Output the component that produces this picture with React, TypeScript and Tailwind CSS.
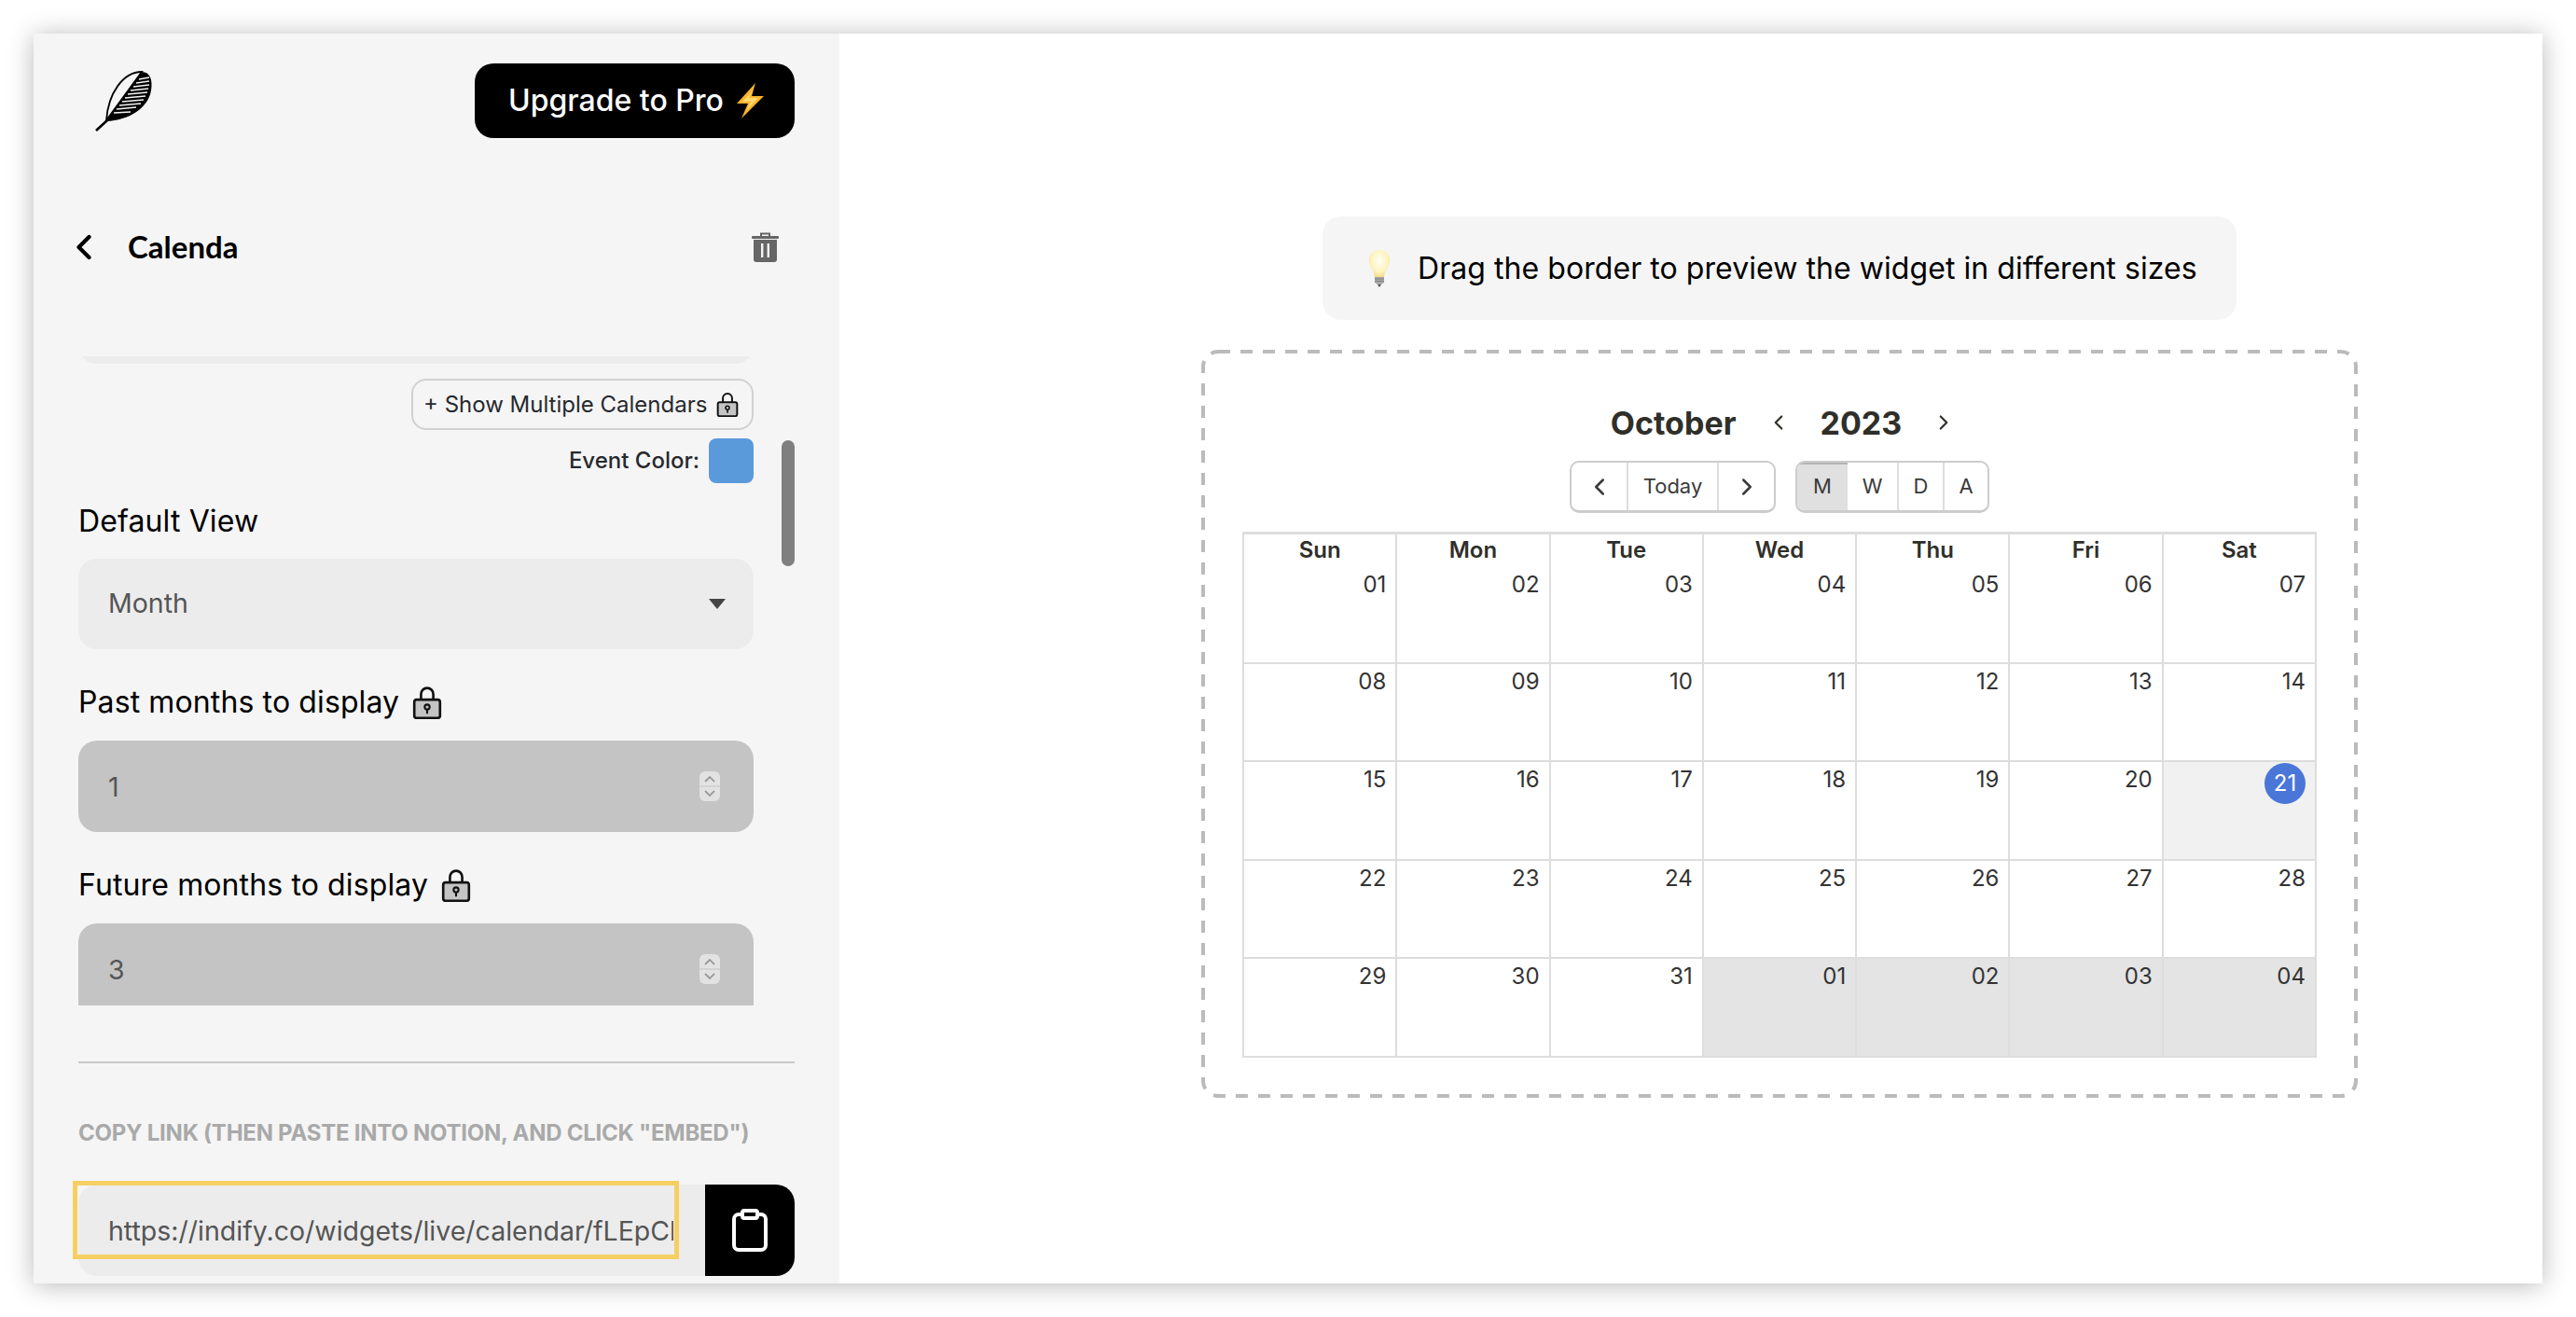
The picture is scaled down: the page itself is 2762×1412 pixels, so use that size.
import { ChevronLeft, ChevronRight } from "lucide-react";

const Lock = ({ size = 32 }: { size?: number }) => (
  <svg width={size} height={size * 1.15} viewBox="0 0 24 28" className="shrink-0">
    <path d="M7 12V7a5 5 0 0 1 10 0v5" fill="none" stroke="#111" strokeWidth="2" />
    <rect x="1.5" y="11.5" width="21" height="15" rx="2" fill="#c4c4c4" stroke="#111" strokeWidth="2" />
    <circle cx="12" cy="17.5" r="2" fill="none" stroke="#111" strokeWidth="1.6" />
    <path d="M12 19.5v3.5" stroke="#111" strokeWidth="1.6" />
  </svg>
);

const Logo = () => (
  <svg width="66" height="69" viewBox="40 24 66 69">
    <path d="M54 79C56 50 72 27 92 27L54 79Z" fill="none" stroke="#000" strokeWidth="1.8" />
    <path d="M54 80L92 27C101 27 104 36 102 47C99 66 78 79 54 80Z" fill="#000" />
    <g stroke="#f5f5f5" strokeWidth="1.3">
      <path d="M89 35L100 33" />
      <path d="M86 39L100 37" />
      <path d="M83 43L100 41" />
      <path d="M80 47L99 45" />
      <path d="M77 51L98 49" />
      <path d="M74 55L96 53" />
      <path d="M71 59L94 57" />
      <path d="M68 63L91 61" />
      <path d="M65 67L86 65" />
      <path d="M62 71L80 70" />
    </g>
    <path d="M55 79L43 90" stroke="#000" strokeWidth="2.6" />
  </svg>
);

const Bolt = () => (
  <svg width="29" height="38" viewBox="0 0 29 38" className="shrink-0">
    <path d="M20 0L0 22H12L5 38L29 14H16L20 0Z" fill="#fbb32e" />
    <path d="M17 8L6 20H15L10 30L23 16H13L17 8Z" fill="#fdd76a" />
  </svg>
);

const Trash = () => (
  <svg width="29" height="32" viewBox="0 0 29 32">
    <path d="M10 4V1.5h9V4" fill="none" stroke="#666" strokeWidth="2" />
    <rect x="0" y="4" width="29" height="3" rx="1" fill="#666" />
    <path d="M2 8h25v21a3 3 0 0 1-3 3H5a3 3 0 0 1-3-3Z" fill="#666" />
    <rect x="10" y="12" width="2.4" height="15" fill="#f5f5f5" />
    <rect x="16.6" y="12" width="2.4" height="15" fill="#f5f5f5" />
  </svg>
);

const Bulb = () => (
  <svg width="26" height="40" viewBox="0 0 26 40" className="shrink-0">
    <defs>
      <radialGradient id="bulbGlow" cx="50%" cy="40%" r="60%">
        <stop offset="0%" stopColor="#fffef5" />
        <stop offset="70%" stopColor="#fdf3bd" />
        <stop offset="100%" stopColor="#f2dc8c" />
      </radialGradient>
    </defs>
    <path d="M13 0C20 0 24 5 24 11C24 18 19 21 18 29H8C7 21 2 18 2 11C2 5 6 0 13 0Z" fill="url(#bulbGlow)" />
    <path d="M8 29h10v6l-3 2h-4l-3-2Z" fill="#a9a9a9" />
    <path d="M8 31h10M8 33.5h10" stroke="#777" strokeWidth="0.8" />
    <path d="M11 37h4l-2 3Z" fill="#555" />
  </svg>
);

const Stepper = () => (
  <svg width="22" height="32" viewBox="0 0 22 32" className="shrink-0">
    <rect width="22" height="32" rx="6" fill="#e2e2e2" />
    <path d="M0 16h22" stroke="#c4c4c4" strokeWidth="1" />
    <path d="M6 11l5-5 5 5M6 21l5 5 5-5" fill="none" stroke="#9a9a9a" strokeWidth="1.8" />
  </svg>
);

const NumberField = ({ value, clip }: { value: string; clip?: boolean }) => (
  <div
    className={`mt-[21px] flex h-[98px] w-[724px] shrink-0 items-center justify-between bg-[#c4c4c4] pl-[32px] pr-[36px] text-[28.5px] text-[#555555] ${
      clip ? "rounded-t-[20px]" : "rounded-[20px]"
    }`}
  >
    <span className="pt-[2px]">{value}</span>
    <Stepper />
  </div>
);

const FieldLabel = ({ text, locked, mt }: { text: string; locked?: boolean; mt: string }) => (
  <div className={`flex h-[40px] shrink-0 items-center gap-[14px] text-[32px] tracking-[0.12px] text-black ${mt}`}>
    <span>{text}</span>
    {locked && <Lock />}
  </div>
);

const weekDays = ["Sun", "Mon", "Tue", "Wed", "Thu", "Fri", "Sat"];
const days = [
  "01", "02", "03", "04", "05", "06", "07",
  "08", "09", "10", "11", "12", "13", "14",
  "15", "16", "17", "18", "19", "20", "21",
  "22", "23", "24", "25", "26", "27", "28",
  "29", "30", "31", "01", "02", "03", "04",
];

const Calendar = () => (
  <div className="mt-[20px] grid w-[1152px] grid-cols-7 border-l-2 border-t-[3px] border-[#dddddd]">
    {weekDays.map((day) => (
      <div
        key={day}
        className="h-[33px] border-r-2 border-[#dddddd] pt-[2px] text-center text-[24px] font-semibold leading-[30px] text-[#2f2f2a]"
      >
        {day}
      </div>
    ))}
    {days.map((day, i) => {
      const isToday = i === 20;
      const isOther = i > 30;
      return (
        <div
          key={i}
          className={`flex h-[105.5px] justify-end border-b-2 border-r-2 border-[#dddddd] pr-[10px] text-[24px] text-[#333333] ${
            isToday ? "bg-[#f1f1f1]" : isOther ? "bg-[#e4e4e4]" : "bg-white"
          }`}
        >
          {isToday ? (
            <span className="mt-[1px] flex h-[44px] w-[44px] items-center justify-center rounded-full bg-[#4a76d8] text-white">
              21
            </span>
          ) : (
            <span className={`leading-[30px] ${i < 7 ? "pt-[6px]" : "pt-[4px]"}`}>{day}</span>
          )}
        </div>
      );
    })}
  </div>
);

const App = () => {
  return (
    <div className="h-[1412px] w-[2762px] overflow-hidden bg-white p-[36px] font-['Inter',sans-serif]">
      <div className="flex h-[1340px] w-[2690px] bg-white shadow-[0_2px_26px_rgba(0,0,0,0.28)]">
        {/* sidebar */}
        <div className="flex h-full w-[864px] shrink-0 flex-col bg-[#f5f5f5] px-[48px] pt-[32px]">
          <div className="flex h-[80px] shrink-0 items-start justify-between">
            <div className="ml-[16px] mt-[6px]">
              <Logo />
            </div>
            <div className="flex h-[80px] w-[343px] items-center gap-[14px] rounded-[20px] bg-black pl-[36px] text-[32px] font-medium text-white">
              <span>Upgrade to Pro</span>
              <Bolt />
            </div>
          </div>

          <div className="mt-[101px] flex h-[32px] w-[751px] shrink-0 items-center justify-between">
            <div className="flex items-center">
              <ChevronLeft size={44} strokeWidth={2.3} className="-ml-[16px] text-black" />
              <span className="ml-[25px] font-['Lato',sans-serif] text-[33px] font-bold text-black">Calenda</span>
            </div>
            <Trash />
          </div>

          <div className="relative mt-[101px] flex h-[696px] shrink-0 flex-col overflow-hidden">
            <div className="-mt-[12px] h-[20px] w-[724px] shrink-0 rounded-b-[20px] bg-[#ececec]" />
            <div className="mt-[16px] ml-[357px] flex h-[55px] w-[367px] shrink-0 items-center gap-[10px] rounded-[16px] border-2 border-[#d1d1d1] pl-[11px] text-[24px] text-[#26292e]">
              <span>+ Show Multiple Calendars</span>
              <Lock size={24} />
            </div>
            <div className="mt-[9px] flex h-[48px] w-[724px] shrink-0 items-center justify-end gap-[10px] text-[24px] font-medium text-[#26292e]">
              <span>Event Color:</span>
              <div className="h-[48px] w-[48px] rounded-[8px] bg-[#5a9ada]" />
            </div>

            <FieldLabel text="Default View" mt="mt-[21px]" />
            <div className="mt-[20px] flex h-[97px] w-[724px] shrink-0 items-center justify-between rounded-[20px] bg-[#ececec] pl-[32px] pr-[30px] text-[28.5px] text-[#555555]">
              <span>Month</span>
              <svg width="18" height="11" viewBox="0 0 18 11">
                <path d="M0 0H18L9 11Z" fill="#444444" />
              </svg>
            </div>

            <FieldLabel text="Past months to display" locked mt="mt-[37px]" />
            <NumberField value="1" />
            <FieldLabel text="Future months to display" locked mt="mt-[37px]" />
            <NumberField value="3" clip />

            <div className="absolute right-0 top-[90px] h-[135px] w-[14px] rounded-full bg-[#7f7f7f]" />
          </div>

          <div className="mt-[60px] h-[2px] shrink-0 bg-[#c8c8c8]" />
          <div className="mt-[60px] h-[30px] shrink-0 whitespace-nowrap text-[24px] font-bold leading-[30px] tracking-[-0.25px] text-[#a9a9a9]">
            COPY LINK (THEN PASTE INTO NOTION, AND CLICK "EMBED")
          </div>

          <div className="relative mt-[40px] flex h-[98px] shrink-0">
            <div className="flex w-[672px] items-center rounded-l-[20px] bg-[#ececec] pl-[32px]">
              <div className="w-[606px] overflow-hidden whitespace-nowrap pt-[2px] text-[28.5px] text-[#555555]">
                https://indify.co/widgets/live/calendar/fLEpCl
              </div>
            </div>
            <div className="flex w-[96px] items-center justify-center rounded-r-[20px] bg-black">
              <svg width="38" height="46" viewBox="0 0 38 46" fill="none">
                <rect x="2" y="6" width="34" height="38" rx="5" stroke="#fff" strokeWidth="4" />
                <rect x="11" y="2" width="16" height="8" rx="2" fill="#000" stroke="#fff" strokeWidth="4" />
              </svg>
            </div>
            <div className="absolute -left-[6px] -top-[4px] h-[84px] w-[650px] border-[5px] border-[#f6cf62]" />
          </div>
        </div>

        {/* preview */}
        <div className="flex flex-1 flex-col items-center pl-[190px] pt-[196px]">
          <div className="flex h-[111px] w-[980px] shrink-0 items-center gap-[28px] rounded-[20px] bg-[#f5f5f5] pl-[48px] text-[32px] tracking-[0.06px] text-black">
            <Bulb />
            <span>Drag the border to preview the widget in different sizes</span>
          </div>

          <div className="relative mt-[32px] flex h-[802px] w-[1240px] shrink-0 flex-col items-center border-4 border-transparent pt-[52px] text-[#2f2f2a]">
            {/* dashed resize frame */}
            <svg width="1240" height="802" className="absolute -left-[4px] -top-[4px]">
              <rect x="2" y="2" width="1236" height="798" rx="16" fill="none" stroke="#bbbbbb" strokeWidth="4" strokeDasharray="13 11" />
            </svg>

            <div className="relative flex h-[44px] items-center pl-[8px] text-[34px] font-bold">
              <span>October</span>
              <ChevronLeft size={26} strokeWidth={2} className="ml-[32px]" />
              <span className="ml-[32px]">2023</span>
              <ChevronRight size={26} strokeWidth={2} className="ml-[32px]" />
            </div>

            <div className="relative mt-[19px] flex h-[56px] gap-[21px] text-[24px] text-[#3a3a3a]">
              <div className="flex w-[221px] overflow-hidden rounded-[10px] border-2 border-b-[3px] border-[#cccccc]">
                <div className="flex w-[61px] items-center justify-center border-r-2 border-[#dddddd]">
                  <ChevronLeft size={30} strokeWidth={2} />
                </div>
                <div className="flex w-[97px] items-center justify-center border-r-2 border-[#dddddd] text-[22px]">Today</div>
                <div className="flex flex-1 items-center justify-center">
                  <ChevronRight size={30} strokeWidth={2} />
                </div>
              </div>
              <div className="flex w-[208px] overflow-hidden rounded-[10px] border-2 border-b-[3px] border-[#cccccc] text-[22px]">
                <div className="flex w-[54px] items-center justify-center bg-[#e0e0e0] shadow-[inset_0_2px_0_#b4b4b4]">M</div>
                <div className="flex w-[55px] items-center justify-center border-r-2 border-[#dddddd]">W</div>
                <div className="flex w-[49px] items-center justify-center border-r-2 border-[#dddddd]">D</div>
                <div className="flex flex-1 items-center justify-center">A</div>
              </div>
            </div>

            <div className="relative">
              <Calendar />
            </div>
          </div>
        </div>
      </div>
    </div>
  );
};

export default App;
